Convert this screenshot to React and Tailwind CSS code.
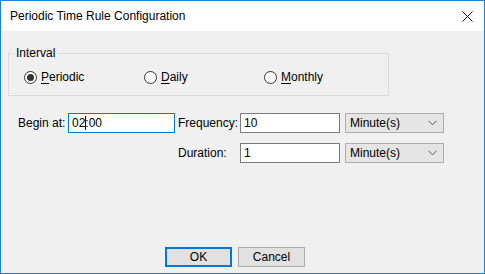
import React from 'react';

const font = { fontFamily: '"Liberation Sans", Arial, sans-serif' };

function Radio({ checked, label, accessKey }) {
  return (
    <label className="flex items-center w-[120px] gap-[4px]">
      <span className="w-[13px] h-[13px] rounded-full border border-[#333333] bg-white flex items-center justify-center">
        {checked && <span className="w-[7px] h-[7px] rounded-full bg-[#333333]" />}
      </span>
      <span className="leading-[14px]">
        <span className="underline underline-offset-2">{accessKey}</span>
        {label.slice(1)}
      </span>
    </label>
  );
}

function Select({ value }) {
  return (
    <div className="w-[99px] h-[20px] border border-[#adadad] bg-[#e5e5e5] flex items-center justify-between pl-[4px] pr-[6px]">
      <span>{value}</span>
      <svg width="9" height="6" viewBox="0 0 9 6">
        <path d="M0.5 0.8 L4.5 4.8 L8.5 0.8" fill="none" stroke="#555" strokeWidth="1" />
      </svg>
    </div>
  );
}

export default function App() {
  return (
    <div
      className="w-[485px] h-[274px] border border-[#1883d7] flex flex-col text-[12px] text-black"
      style={font}
    >
      {/* title bar */}
      <div className="h-[30px] bg-white flex items-center justify-between pl-[9px] pr-[11px]">
        <span className="text-[12px]">Periodic Time Rule Configuration</span>
        <svg width="11" height="11" viewBox="0 0 11 11">
          <path d="M0.5 0.5 L10.5 10.5 M10.5 0.5 L0.5 10.5" stroke="#111" strokeWidth="1" />
        </svg>
      </div>

      {/* body */}
      <div className="flex-1 bg-[#f0f0f0] flex flex-col">
        <fieldset className="mt-[15px] ml-[7px] w-[381px] border border-[#dcdcdc] p-0 m-0">
          <legend className="ml-[4px] px-[3px] leading-[14px]">Interval</legend>
          <div className="flex mt-[10px] mb-[11px] pl-[15px]">
            <Radio checked label="Periodic" accessKey="P" />
            <Radio label="Daily" accessKey="D" />
            <Radio label="Monthly" accessKey="M" />
          </div>
        </fieldset>

        <div className="flex items-center mt-[17px] ml-[17px]">
          <span className="w-[50px]">Begin at:</span>
          <div className="w-[107px] h-[20px] border border-[#0078d7] bg-white flex items-center pl-[3px]">
            02
            <span className="inline-block w-px h-[14px] bg-black -mr-px" />
            :00
          </div>
          <span className="w-[62px] ml-[3px]">Frequency:</span>
          <div className="w-[100px] h-[20px] border border-[#7a7a7a] bg-white flex items-center pl-[3px]">10</div>
          <div className="ml-[5px]">
            <Select value="Minute(s)" />
          </div>
        </div>

        <div className="flex items-center mt-[10px] ml-[177px]">
          <span className="w-[62px]">Duration:</span>
          <div className="w-[100px] h-[20px] border border-[#7a7a7a] bg-white flex items-center pl-[3px]">1</div>
          <div className="ml-[5px]">
            <Select value="Minute(s)" />
          </div>
        </div>

        <div className="mt-auto mb-[6px] ml-[164px] flex gap-[6px]">
          <button className="w-[67px] h-[20px] border border-[#0078d7] bg-[#e1e1e1] shadow-[inset_0_0_0_1px_#0078d7]">OK</button>
          <button className="w-[67px] h-[20px] border border-[#adadad] bg-[#e1e1e1]">Cancel</button>
        </div>
      </div>
    </div>
  );
}
